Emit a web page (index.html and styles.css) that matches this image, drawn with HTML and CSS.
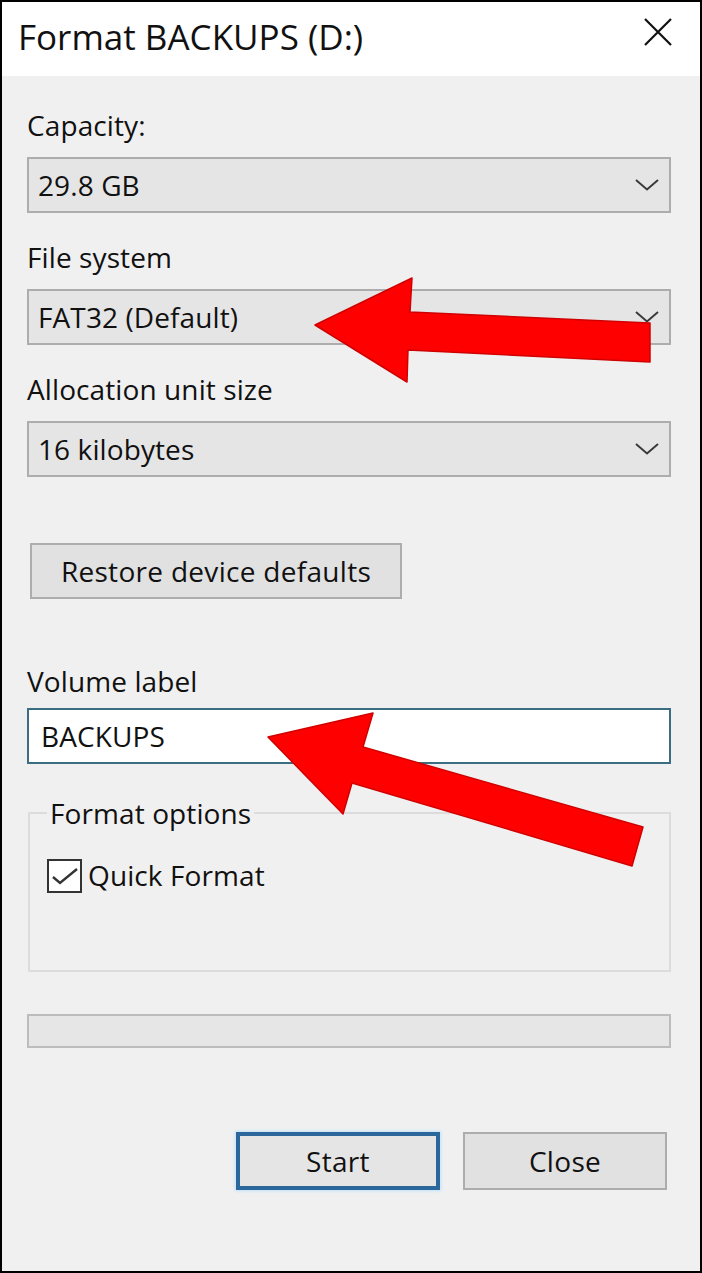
FILE: index.html
```html
<!DOCTYPE html>
<html lang="en">
<head>
<meta charset="utf-8">
<title>Format BACKUPS (D:)</title>
<link rel="stylesheet" href="styles.css">
</head>
<body>
<div class="window">
  <header class="titlebar">
    <span class="title">Format BACKUPS (D:)</span>
    <svg class="close-x" width="28" height="28" viewBox="0 0 28 28" aria-label="Close">
      <path d="M1 1 L27 27 M27 1 L1 27" stroke="#111" stroke-width="2.2" fill="none"/>
    </svg>
  </header>
  <main class="content">
    <div class="field-label">Capacity:</div>
    <div class="combo"><span>29.8 GB</span>
      <svg class="chev" width="26" height="14" viewBox="0 0 26 14"><polyline points="2,2 13,11.5 24,2" fill="none" stroke="#3a3a3a" stroke-width="2"/></svg>
    </div>
    <div class="field-label">File system</div>
    <div class="combo"><span>FAT32 (Default)</span>
      <svg class="chev" width="26" height="14" viewBox="0 0 26 14"><polyline points="2,2 13,11.5 24,2" fill="none" stroke="#3a3a3a" stroke-width="2"/></svg>
    </div>
    <div class="field-label">Allocation unit size</div>
    <div class="combo"><span>16 kilobytes</span>
      <svg class="chev" width="26" height="14" viewBox="0 0 26 14"><polyline points="2,2 13,11.5 24,2" fill="none" stroke="#3a3a3a" stroke-width="2"/></svg>
    </div>
    <button class="btn restore">Restore device defaults</button>
    <div class="field-label volume">Volume label</div>
    <div class="textbox">BACKUPS</div>
    <div class="group">
      <span class="legend">Format options</span>
      <div class="check-row">
        <span class="checkbox">
          <svg width="31" height="30" viewBox="0 0 31 30"><polyline points="4,16 11,22 28,8" fill="none" stroke="#333" stroke-width="2.4"/></svg>
        </span>
        <span class="check-text">Quick Format</span>
      </div>
    </div>
    <div class="progress"></div>
    <div class="actions">
      <button class="btn default">Start</button>
      <button class="btn">Close</button>
    </div>
  </main>
  <svg class="arrows" width="702" height="1273" viewBox="0 0 702 1273">
    <polygon points="315,325 412,278 410,312 650,323 650,362 408,350 407,382" fill="#ff0000" stroke="#d00000" stroke-width="1.5" stroke-linejoin="round"/>
    <polygon points="268,737 373,713 363,747 643,827 632,866 352,783 343,814" fill="#ff0000" stroke="#d00000" stroke-width="1.5" stroke-linejoin="round"/>
  </svg>
</div>
</body>
</html>
```

FILE: styles.css
```css
* { box-sizing: border-box; }

html, body {
  margin: 0;
  padding: 0;
  background: #f0f0f0;
}

.window {
  position: relative;
  width: 702px;
  height: 1273px;
  border: 2px solid #000;
  background: #f0f0f0;
  font-family: "Open Sans", "Noto Sans", sans-serif;
  color: #111;
  overflow: hidden;
}

.titlebar {
  height: 74px;
  background: #fff;
  display: flex;
  align-items: flex-start;
  justify-content: space-between;
  padding: 17px 28px 0 16px;
}

.title {
  font-size: 35px;
  line-height: 35px;
  color: #111;
}

.close-x {
  margin-top: -1px;
}

.content {
  padding: 32px 29px 0 25px;
  font-size: 28px;
  line-height: 35px;
  letter-spacing: 0.1px;
}

.field-label {
  margin-top: 27px;
  height: 35px;
}

.field-label:first-child {
  margin-top: 0;
}

.combo {
  margin-top: 14px;
  height: 56px;
  border: 2px solid #adadad;
  background: #e5e5e5;
  display: flex;
  align-items: center;
  justify-content: space-between;
  padding: 0 9px 0 9px;
}

.btn {
  font-family: inherit;
  font-size: 28px;
  letter-spacing: 0.3px;
  color: #111;
  background: #e1e1e1;
  border: 2px solid #adadad;
  padding: 0;
  line-height: 35px;
  display: flex;
  align-items: center;
  justify-content: center;
}

.restore {
  margin: 66px 0 0 3px;
  width: 372px;
  height: 56px;
}

.field-label.volume {
  margin-top: 65px;
}

.textbox {
  margin-top: 9px;
  height: 56px;
  border: 2px solid #3b6e83;
  background: #fff;
  display: flex;
  align-items: center;
  padding-left: 12px;
}

.group {
  margin: 48px 0 0 1px;
  height: 160px;
  border: 2px solid #dcdcdc;
  display: flex;
  flex-direction: column;
  align-items: flex-start;
}

.legend {
  margin: -18px 0 0 17px;
  padding: 0 3px;
  background: #f0f0f0;
  height: 35px;
}

.check-row {
  margin: 27px 0 0 17px;
  display: flex;
  align-items: center;
  gap: 6px;
  height: 35px;
}

.checkbox {
  width: 35px;
  height: 34px;
  border: 2px solid #333;
  background: #fff;
  display: flex;
  align-items: center;
  justify-content: center;
}

.progress {
  margin-top: 42px;
  height: 34px;
  border: 2px solid #bcbcbc;
  background: #e6e6e6;
}

.actions {
  margin-top: 84px;
  display: flex;
  justify-content: flex-end;
  gap: 23px;
  padding-right: 4px;
}

.actions .btn {
  width: 204px;
  height: 58px;
}

.btn.default {
  border: 4px solid #2b679b;
  box-shadow: 0 0 3px 1px #bfe3fb;
  background: #e5e5e5;
}

.arrows {
  position: absolute;
  left: -2px;
  top: -2px;
  pointer-events: none;
}
```
